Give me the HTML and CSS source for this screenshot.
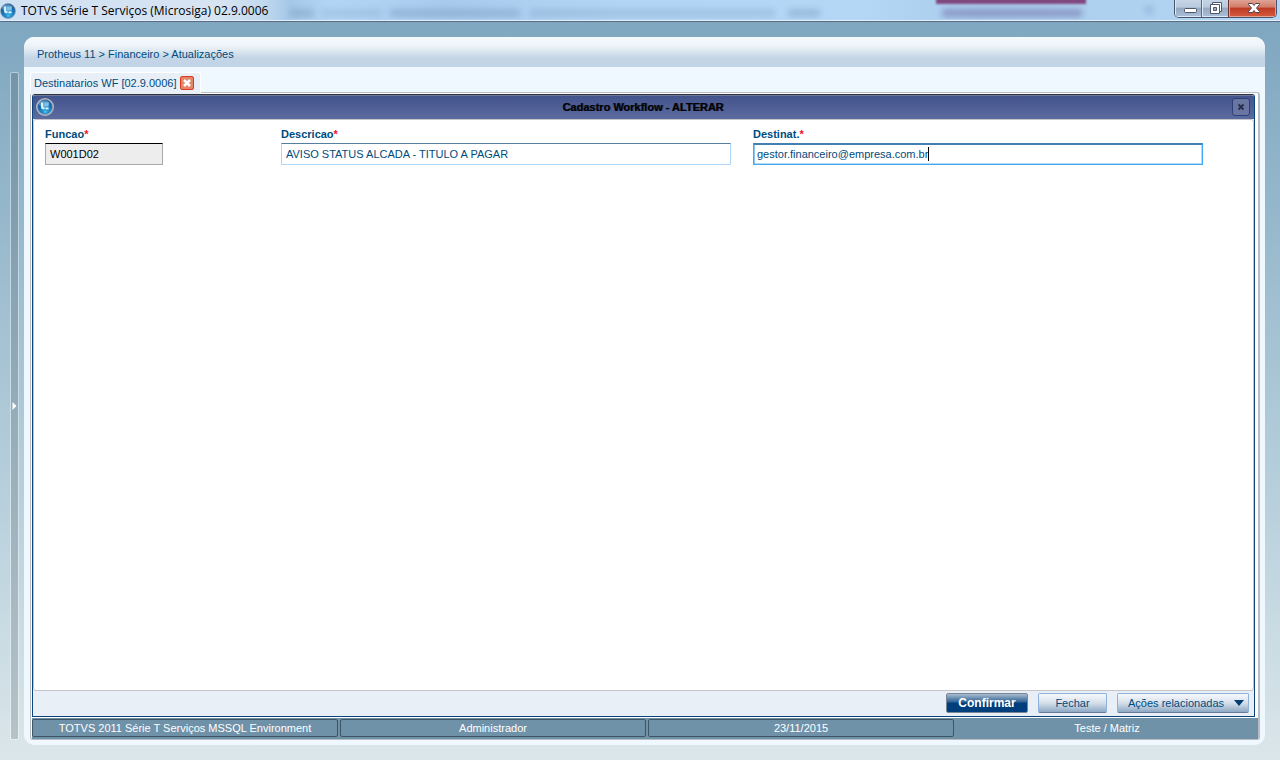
FILE: index.html
```
<!DOCTYPE html>
<html lang="pt-BR">
<head>
<meta charset="utf-8">
<title>TOTVS Série T Serviços (Microsiga) 02.9.0006</title>
<link rel="stylesheet" href="styles.css">
</head>
<body>
<svg class="defs" aria-hidden="true">
  <defs>
    <radialGradient id="orb" cx="55%" cy="75%" r="70%">
      <stop offset="0" stop-color="#35aee4"/>
      <stop offset=".5" stop-color="#1b7cc0"/>
      <stop offset="1" stop-color="#0f4a8c"/>
    </radialGradient>
    <symbol id="logo" viewBox="0 0 18 18">
      <circle cx="9" cy="9" r="8.4" fill="url(#orb)" stroke="#8d9db0" stroke-width=".8"/>
      <ellipse cx="8" cy="5" rx="6" ry="3.500" fill="#9fd4ef" opacity=".45"/>
      <path d="M4.500 4h2.500v5h1.500v2.500H6.500Q4.500 11 4.500 9z" fill="#d8f0fb"/>
      <path d="M8 4h5v4.500H8z" fill="#7cc2e8"/>
      <path d="M9.500 9.500h3.500v2H9.500z" fill="#eefaff"/>
      <path d="M8 14.500h2.500" stroke="#6cc4ea" stroke-width="1.200"/>
    </symbol>
  </defs>
</svg>
<header class="titlebar">
  <span class="glass" aria-hidden="true">
    <i class="smudge smudge-a"></i><i class="smudge smudge-b"></i><i class="smudge smudge-c"></i><i class="smudge smudge-d"></i><i class="smudge smudge-e"></i>
    <i class="purple"></i><i class="purple-text"></i><i class="dot"></i>
  </span>
  <svg class="title-logo" aria-hidden="true"><use href="#logo"/></svg>
  <h1 class="title">TOTVS Série T Serviços (Microsiga) 02.9.0006</h1>
  <div class="controls">
    <button class="control" type="button" aria-label="Minimizar"><svg viewBox="0 0 28 18"><rect x="8.500" y="8.500" width="12" height="4" rx="1" fill="#fff" stroke="#52566b"/></svg></button>
    <button class="control restore" type="button" aria-label="Restaurar"><svg viewBox="0 0 26 18"><path d="M9.500 2.500h9v9h-9z" fill="#fff" stroke="#52566b"/><path d="M7.500 4.500h9v9h-9z" fill="#fff" stroke="#52566b"/><path d="M10.500 7.500h3v3h-3z" fill="#9fb1ca" stroke="#52566b"/></svg></button>
    <button class="control close" type="button" aria-label="Fechar janela"><svg viewBox="0 0 46 18"><path d="M18.500 3.500h4l1.500 2 1.500-2h4v1L26.500 8l3 3.500v1h-4L24 10.500l-1.500 2h-4v-1l3-3.500-3-3.500z" fill="#fff" stroke="#57424c"/></svg></button>
  </div>
</header>
<div class="workspace">
  <button class="rail" type="button" aria-label="Abrir menu lateral"><svg viewBox="0 0 6 8"><path d="M1 0l4 4-4 4z" fill="#fff"/></svg></button>
  <main class="panel">
    <nav class="crumbs" aria-label="Localização">Protheus 11 &gt; Financeiro &gt; Atualizações</nav>
    <div class="body">
      <div class="tab">
        <span>Destinatarios WF [02.9.0006]</span>
        <button class="tab-close" type="button" aria-label="Fechar aba"><svg viewBox="0 0 12 12"><path d="M3 3l6 6M9 3l-6 6" stroke="#fff" stroke-width="2.500"/></svg></button>
      </div>
      <div class="frame">
        <section class="dialog">
          <header class="dialog-head">
            <svg class="dialog-logo" viewBox="0 0 18 18" aria-hidden="true"><circle cx="9" cy="9" r="9" fill="#b3bac4"/><use href="#logo" x="1" y="1" width="16" height="16"/></svg>
            <h2 class="dialog-title">Cadastro Workflow - ALTERAR</h2>
            <button class="dialog-close" type="button" aria-label="Fechar cadastro"><svg viewBox="0 0 16 16"><path d="M5.500 5.500l5 5M10.500 5.500l-5 5" stroke="#27304f" stroke-width="2"/></svg></button>
          </header>
          <form class="form">
            <div class="field code">
              <label for="funcao">Funcao<b>*</b></label>
              <input id="funcao" class="input readonly" value="W001D02" readonly>
            </div>
            <div class="field">
              <label for="descricao">Descricao<b>*</b></label>
              <input id="descricao" class="input" value="AVISO STATUS ALCADA - TITULO A PAGAR">
            </div>
            <div class="field">
              <label for="destinat">Destinat.<b>*</b></label>
              <input id="destinat" class="input active" value="gestor.financeiro@empresa.com.br">
              <span class="caret"></span>
            </div>
          </form>
          <footer class="actions">
            <button class="button primary" type="button">Confirmar</button>
            <button class="button" type="button">Fechar</button>
            <button class="button menu" type="button">Ações relacionadas<svg viewBox="0 0 10 6"><path d="M0 0h10L5 6z" fill="#003e73"/></svg></button>
          </footer>
        </section>
        <footer class="status">
          <span>TOTVS 2011 Série T Serviços MSSQL Environment</span>
          <span>Administrador</span>
          <span>23/11/2015</span>
          <span>Teste / Matriz</span>
        </footer>
      </div>
    </div>
  </main>
</div>
</body>
</html>
```
FILE: styles.css
```
* { box-sizing: border-box; }
html { height: 100%; }
body {
  margin: 0;
  min-height: 100%;
  display: flex;
  flex-direction: column;
  font: 11px/14px "Liberation Sans", Arial, sans-serif;
  color: #004b7d;
}
button { padding: 0; border: 0; font: inherit; color: inherit; background: none; }
svg { display: block; }
.defs { position: absolute; width: 0; height: 0; }

.titlebar {
  position: relative;
  display: flex;
  align-items: flex-start;
  height: 22px;
  border-bottom: 1px solid #5b6b86;
  box-shadow: inset 0 -1px #e4f0fb;
  background: linear-gradient(90deg, #cfe0f2 0, #d7e4f2 220px, #c3d9ee 262px, #a5c8e8 290px, #b3d5f5 330px, #a8cbed 450px, #b3d5f5 620px, #b5d7f6 860px, #aacdec 980px, #b5d6f5 100%);
}
.glass { position: absolute; inset: 0 0 2px; overflow: hidden; }
.glass i { position: absolute; filter: blur(3px); }
.smudge { top: 9px; height: 8px; background: #6688ab; opacity: .35; }
.smudge-a { left: 290px; width: 24px; }
.smudge-b { left: 322px; width: 60px; opacity: .2; }
.smudge-c { left: 390px; width: 130px; }
.smudge-d { left: 530px; width: 245px; opacity: .25; }
.smudge-e { left: 788px; width: 32px; }
.glass .purple { left: 936px; top: -6px; width: 150px; height: 10px; background: #81477f; filter: blur(1px); }
.glass .purple-text { left: 942px; top: 9px; width: 140px; height: 8px; background: #7474aa; opacity: .6; }
.glass .dot { left: 1145px; top: 6px; width: 8px; height: 8px; background: #7c9fc5; opacity: .5; }
.title-logo { position: relative; width: 16px; height: 16px; margin: 3px 5px 0 0; }
.title {
  position: relative;
  flex: 1;
  margin: 0;
  font: 12px/22px "Open Sans", "Noto Sans", sans-serif;
  color: #000;
}
.controls {
  position: relative;
  display: flex;
  margin-right: 3px;
  border: 1px solid #46546d;
  border-top: 0;
  border-radius: 0 0 5px 5px;
  overflow: hidden;
}
.control {
  width: 27px;
  height: 17px;
  border: 1px solid #dce8f5;
  border-top: 0;
  background: linear-gradient(#c5d4e6 0, #b9cade 45%, #94a8c2 50%, #aabdd6 100%);
}
.control svg { height: 18px; margin: 0 auto; }
.control.restore { box-shadow: -1px 0 #596983; }
.control.close {
  width: 47px;
  border-color: #e6a08e;
  box-shadow: -1px 0 #6b2f2b;
  background: linear-gradient(#dfa496 0, #d27a67 45%, #bd3a24 50%, #d4573c 100%);
}

.workspace {
  flex: 1;
  display: flex;
  padding: 15px 15px 15px 10px;
  gap: 5px;
  background: linear-gradient(#7fa7c0, #b8d0dc 65%, #dbe6ea);
}
.rail {
  display: flex;
  align-items: center;
  width: 9px;
  margin: 35px 0 5px;
  border: 1px solid rgba(255, 255, 255, .4);
  border-radius: 2px;
  background: linear-gradient(#7395aa, #b5c2c8) padding-box;
}
.rail svg { width: 7px; height: 8px; }
.panel {
  flex: 1;
  min-width: 0;
  display: flex;
  flex-direction: column;
  border-radius: 10px;
  overflow: hidden;
  background: #eff7ff;
}
.crumbs {
  height: 30px;
  padding: 0 13px;
  line-height: 34px;
  background: linear-gradient(#f5fafc 0, #edf4f8 30%, #c4d5e6 70%, #c0d4e6 100%);
}
.body { flex: 1; display: flex; flex-direction: column; padding: 5px 5px 5px 6px; }
.tab {
  position: relative;
  align-self: flex-start;
  display: flex;
  align-items: center;
  gap: 4px;
  height: 22px;
  padding: 0 6px 2px 3px;
  margin-bottom: -2px;
  border: 1px solid #fff;
  border-bottom: 0;
  border-radius: 3px 3px 0 0;
  background: #e8eff6;
}
.tab-close {
  width: 14px;
  height: 14px;
  border: 1px solid #da3b20;
  border-radius: 2px;
  background: #e28667;
}
.frame {
  flex: 1;
  display: flex;
  flex-direction: column;
  padding: 1px 0 0 1px;
  border: 1px solid #b9bcc1;
  border-right-width: 2px;
  border-radius: 3px;
  background: #fff;
}
.dialog {
  flex: 1;
  display: flex;
  flex-direction: column;
  margin-right: 3px;
  border: 1px solid #0d437b;
  border-top-color: #30323c;
  border-radius: 3px 3px 0 0;
  overflow: hidden;
  background: #e8eff6;
}
.dialog-head {
  display: flex;
  align-items: center;
  height: 24px;
  padding: 0 4px 2px 3px;
  border-top: 1px solid #6e7898;
  background: linear-gradient(#43538c, #5c6b9f);
}
.dialog-logo { width: 18px; height: 18px; }
.dialog-title {
  flex: 1;
  margin: 0;
  text-align: center;
  font-size: 11px;
  color: #000;
  text-shadow: 1px 0 #00000080;
}
.dialog-close {
  width: 18px;
  height: 18px;
  border: 1px solid #2d3f78;
  border-radius: 3px;
  background: #6976a2;
}
.form {
  flex: 1;
  display: grid;
  grid-template-columns: minmax(0, 214fr) minmax(0, 450fr) minmax(0, 450fr);
  column-gap: 22px;
  align-content: start;
  padding: 7px 50px 0 11px;
  border: 1px solid #c5c5c9;
  border-radius: 3px;
  background: #fff;
}
.field { position: relative; min-width: 0; }
.field.code .input { width: 55%; }
.field label { display: block; height: 16px; font-weight: bold; }
.field b { color: #f0102c; }
.input {
  display: block;
  width: 100%;
  height: 22px;
  padding: 0 4px;
  border: 1px solid #add6f8;
  border-top-color: #567f9d;
  border-radius: 0;
  outline: 0;
  font: inherit;
  color: #004b7d;
  background: #fff;
}
.input.readonly { border-color: #a9a9a9; border-top-color: #000; color: #000; background: #ededed; }
.input.active {
  padding: 0 3px;
  border-color: #41a8f4;
  border-top-color: #4280b2;
  box-shadow: inset 0 1px #4280b2, inset 1px 0 #8cc6f2, inset -1px -1px #b9d9f1;
}
.caret { position: absolute; left: 175px; top: 20px; width: 1px; height: 14px; background: #000; }
.actions {
  display: flex;
  justify-content: flex-end;
  gap: 10px;
  padding: 2px 5px 3px;
}
.button {
  height: 20px;
  min-width: 69px;
  border: 1px solid #8fb2dd;
  border-bottom-color: #687c99;
  border-radius: 2px;
  background: linear-gradient(#f6f9fc, #d5dfea 50%, #8ea9c5);
}
.button.primary {
  min-width: 82px;
  border-color: #7c8795;
  font-weight: bold;
  font-size: 12px;
  color: #fff;
  background: linear-gradient(#a9bdd0, #2e6194 45%, #003e7c 50%, #003e7c);
}
.button.menu { display: flex; align-items: center; justify-content: space-between; min-width: 132px; padding: 0 4px 0 10px; }
.button.menu svg { width: 10px; height: 6px; }
.status {
  display: grid;
  grid-template-columns: 306fr 306fr 306fr 302fr;
  gap: 2px;
  margin-top: 1px;
  padding: 1px 0 2px;
  background: #7092a9;
  color: #fff;
  text-align: center;
}
.status span { height: 18px; border: 1px solid #3f5563; border-radius: 2px; line-height: 16px; }
.status span:last-child { border-color: transparent; }
```
